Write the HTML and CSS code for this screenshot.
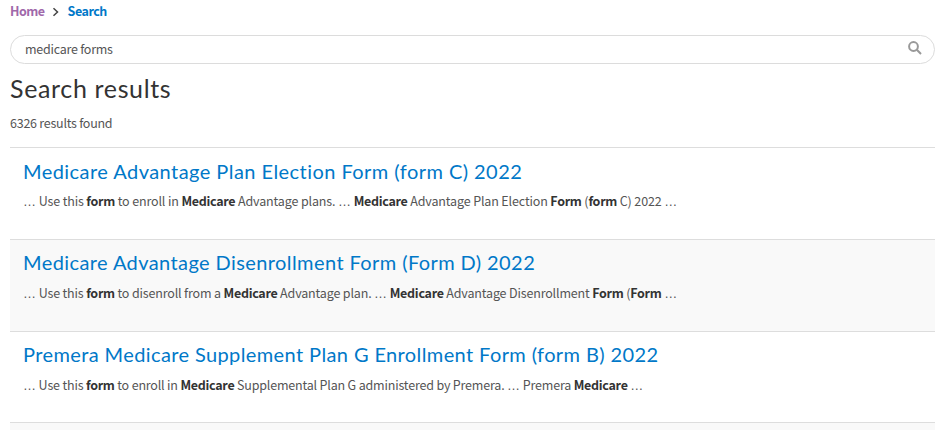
FILE: index.html
```
<!DOCTYPE html>
<html lang="en">
<head>
<meta charset="utf-8">
<title>Search results</title>
<link rel="stylesheet" href="styles.css">
</head>
<body>
<nav class="breadcrumb"><a class="visited" href="#">Home</a><svg class="chevron" viewBox="0 0 8 10"><path d="M1.5 1.2 5.5 5 1.5 8.8"/></svg><a href="#">Search</a></nav>
<div class="search-box"><span>medicare forms</span><svg class="search-icon" viewBox="0 0 14 14"><circle cx="5.5" cy="5.5" r="4.4"/><path d="M8.8 8.8 13 13"/></svg></div>
<h1>Search results</h1>
<p class="count">6326 results found</p>
<main class="results">
<article class="result first"><h2><a href="#">Medicare Advantage Plan Election Form (form C) 2022</a></h2><p><i>…</i> Use this <b>form</b> to enroll in <b>Medicare</b> Advantage plans. <i>…</i> <b>Medicare</b> Advantage Plan Election <b>Form</b> (<b>form</b> C) 2022 <i>…</i></p></article>
<article class="result alt"><h2><a href="#">Medicare Advantage Disenrollment Form (Form D) 2022</a></h2><p><i>…</i> Use this <b>form</b> to disenroll from a <b>Medicare</b> Advantage plan. <i>…</i> <b>Medicare</b> Advantage Disenrollment <b>Form</b> (<b>Form</b> <i>…</i></p></article>
<article class="result last"><h2><a href="#">Premera Medicare Supplement Plan G Enrollment Form (form B) 2022</a></h2><p><i>…</i> Use this <b>form</b> to enroll in <b>Medicare</b> Supplemental Plan G administered by Premera. <i>…</i> Premera <b>Medicare</b> <i>…</i></p></article>
<div class="edge"></div>
</main>
</body>
</html>
```
FILE: styles.css
```
* { box-sizing: border-box; }
body { margin: 0; padding: 4px 8px 0 10px; height: 430px; overflow: hidden; font: 12.5px/16px "Noto Sans CJK SC", sans-serif; letter-spacing: -.25px; color: #555; background: #fff; }
a { color: #0078c8; text-decoration: none; }
h1, h2, p { margin: 0; font-weight: 400; white-space: nowrap; }
.breadcrumb { display: flex; align-items: center; height: 16px; font-weight: 700; font-size: 12.5px; letter-spacing: -.5px; }
.breadcrumb a { margin-top: -2px; }
.breadcrumb .visited { color: #a068aa; }
.chevron { width: 8px; height: 10px; margin: 0 8px 0 7px; fill: none; stroke: #444; stroke-width: 1.5; }
.search-box { display: flex; align-items: center; justify-content: space-between; height: 29px; margin-top: 15px; padding: 0 12px 2px 14px; border: 1px solid #dcdcdc; border-radius: 15px; }
.search-icon { width: 14px; height: 14px; margin-bottom: 1px; fill: none; stroke: #999; stroke-width: 2; }
h1 { margin-top: 7px; font: 400 25px/34px Lato, sans-serif; letter-spacing: .65px; color: #333; }
.count { margin-top: 10px; }
.results { margin-top: 16px; }
.result { height: 92px; padding: 10px 13px 0; border-top: 1px solid #ddd; }
.first { padding-top: 11px; }
.last { height: 91px; }
.alt { background: #f9f9f9; }
.edge { height: 8px; border-top: 1px solid #ddd; background: #f9f9f9; }
h2 { font: 400 20px/24px Lato, sans-serif; letter-spacing: .41px; font-variant-ligatures: none; }
.first h2 { letter-spacing: .45px; }
.last h2 { letter-spacing: .39px; }
.result p { margin-top: 11px; letter-spacing: -.16px; }
.first p { margin-top: 10px; letter-spacing: -.14px; }
.last p { letter-spacing: -.18px; }
i { font: 13px/1 "Liberation Sans", sans-serif; letter-spacing: 0; }
b { color: #333; font-weight: 700; letter-spacing: -.28px; }
```
